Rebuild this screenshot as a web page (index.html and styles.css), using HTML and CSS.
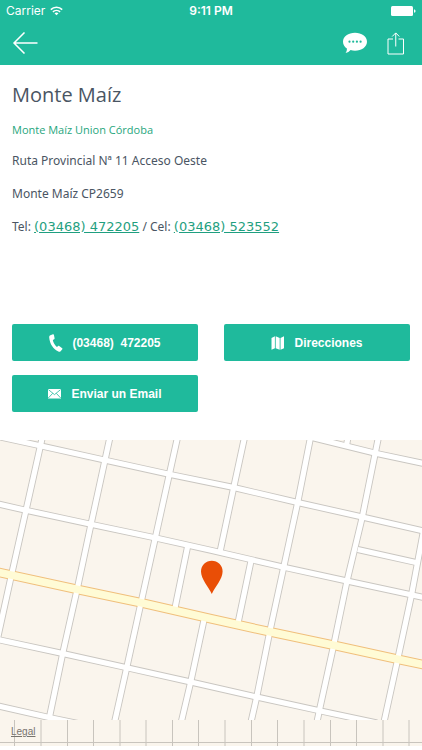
FILE: index.html
```
<!DOCTYPE html>
<html lang="es">
  <head>
    <meta charset="utf-8">
    <meta name="viewport" content="width=device-width, initial-scale=1">
    <title>Monte Maíz</title>
    <link rel="stylesheet" href="styles.css">
  </head>
  <body>
    <header class="header">
      <div class="status">
        <div class="carrier">
          <span>Carrier</span>
          <svg width="13" height="10" viewBox="0 0 13 10" fill="none" stroke="#fff" stroke-width="1.6">
            <path d="M.8 3.6a8.2 8.2 0 0 1 11.4 0M2.9 5.9a5.2 5.2 0 0 1 7.2 0"/>
            <path d="M4.5 7.3a3 3 0 0 1 4 0l-2 2z" fill="#fff" stroke="none"/>
          </svg>
        </div>
        <div class="time">9:11 PM</div>
        <div class="battery">
          <svg width="25" height="10" viewBox="0 0 25 10" fill="#fff">
            <rect width="22" height="10" rx="1.5"/>
            <path d="M23 3.2q1.6.4 1.6 1.8T23 6.8z"/>
          </svg>
        </div>
      </div>
      <nav class="toolbar">
        <button class="icon-button" aria-label="Volver">
          <svg width="26" height="22" viewBox="0 0 26 22" fill="none" stroke="#fff" stroke-width="1.5">
            <path d="M12.500.5 2 11l10.500 10.500M2 11h23.500"/>
          </svg>
        </button>
        <div class="actions">
          <button class="icon-button" aria-label="Comentarios">
            <svg width="24" height="22" viewBox="0 0 24 22">
              <path fill="#fff" d="M12 .8c6.600 0 12 3.800 12 8.900s-5.400 9-12 9c-1.600 0-3.100-.2-4.400-.6C6.300 19.600 4.600 20.800 2.600 21c.9-1.200 1.400-2.900 1.300-4.500C1.500 14.900 0 12.500 0 9.700 0 4.600 5.400.8 12 .8z"/>
              <g fill="#1fba9c"><circle cx="6.500" cy="9.700" r="1.100"/><circle cx="10.200" cy="9.700" r="1.100"/><circle cx="13.900" cy="9.700" r="1.100"/><circle cx="17.600" cy="9.700" r="1.100"/></g>
            </svg>
          </button>
          <button class="icon-button" aria-label="Compartir">
            <svg width="18" height="23" viewBox="0 0 18 23" fill="none" stroke="#fff">
              <path d="M6 7H1v15h15.500V7h-5M8.750 14.500V1M5.200 4.500 8.750.9l3.550 3.600"/>
            </svg>
          </button>
        </div>
      </nav>
    </header>

    <main>
      <section class="info">
        <h1>Monte Maíz</h1>
        <p class="region">Monte Maíz Union Córdoba</p>
        <p>Ruta Provincial Nª 11 Acceso Oeste</p>
        <p>Monte Maíz CP2659</p>
        <p>Tel: <a href="tel:03468472205">(03468) 472205</a> / Cel: <a href="tel:03468523552">(03468) 523552</a></p>
      </section>

      <section class="buttons">
        <button class="button">
          <svg width="14" height="18" viewBox="0 0 14 18" fill="#fff">
            <path d="M1.400 1.300 3.900.3c.5-.2.900 0 1 .5l.7 3.500c.1.400-.1.700-.4.900l-1.400.8c.5 2.600 2 5.200 4.100 6.900l1.300-.9c.3-.2.700-.2 1 0l3 2.200c.4.300.4.700.1 1l-1.700 2c-.6.600-1.400.6-2.200.3C4.300 15.200.7 10 .2 3.500.1 2.500.500 1.700 1.400 1.300z"/>
          </svg>
          <span>(03468)  472205</span>
        </button>
        <button class="button">
          <svg width="14" height="14" viewBox="0 0 14 14" fill="#fff">
            <path d="M.5 2 3.900.3v11.900L.5 13.800zM4.700.3l4 1.700v11.800l-4-1.600zM9.500 2 13 .3v11.900l-3.500 1.600z"/>
          </svg>
          <span>Direcciones</span>
        </button>
        <button class="button">
          <svg width="14" height="10" viewBox="0 0 14 10">
            <rect width="13" height="9.500" fill="#fff"/>
            <path d="M.4.600l6.100 5 6.100-5M.3 9l4.400-4.700M12.700 9 8.300 4.300" fill="none" stroke="#1fba9c" stroke-width=".8"/>
          </svg>
          <span>Enviar un Email</span>
        </button>
      </section>

      <section class="map">
        <svg class="map-canvas" viewBox="0 0 422 306">
          <defs>
            <clipPath id="tiles"><rect width="422" height="280"/></clipPath>
            <g id="streets">
              <path d="M0-3 40 5.700 105.700 20.300 169.300 34.300 233.700 47.500 297.700 62.500 362.300 77 424 91"/>
              <path d="M-2 64 26 70.300 91 84.300 155.300 97.900 211 110.300 283.700 127.200 347 141 424 157.500"/>
              <path d="M-2 199.600 62.700 213.500 126.700 227.700 190.700 242 256.700 257 319.300 270.700 377 283"/>
              <path d="M-2 266 49.500 277.600 78 283.500"/>
              <path d="M310-3 375.700 13.300 424 23.500M357.700 109.500 417 122.700"/>
              <path d="M42.400-3 26 70.300 11 137-2.800 200"/>
              <path d="M110-3 91 84.300 77 150 62.700 213.500 49.500 277"/>
              <path d="M177.600-3 155.300 97.900 141 162.700 126.700 227.700 114.600 282"/>
              <path d="M244.600-3 233.700 47.500 220 112M204 180 190.700 242 181.300 282"/>
              <path d="M187.700 106 175 168M251 121 238 183"/>
              <path d="M310.600-3 297.700 62.500 283.700 127.200 269.700 192 256.700 257 251 282"/>
              <path d="M378.500-3 362.300 77 347 141 333.700 205.300 319.300 270.700 317 282"/>
              <path d="M423.500 91 411.500 155 397.700 219.300 384 282M348-3 346.400 6"/>
            </g>
            <path id="route" d="M-3 132 77.700 149.500 141 162.700 211 178.700 269.700 191.800 333.700 205.300 397.700 219.300 425 225"/>
          </defs>
          <rect width="422" height="306" fill="#faf5ed"/>
          <g clip-path="url(#tiles)" fill="none">
            <use href="#streets" stroke="#c9c6c1" stroke-width="7"/>
            <use href="#route" stroke="#f0bf7c" stroke-width="9.600"/>
            <use href="#streets" stroke="#fff" stroke-width="5.200"/>
            <use href="#route" stroke="#fffbd5" stroke-width="7.600"/>
          </g>
          <!-- tiles not loaded yet -->
          <path d="M14.500 280v26M41 280v26M67.500 280v26M93.500 280v26M120 280v26M146 280v26M172.500 280v26M198.500 280v26M225 280v26M251.500 280v26M277.500 280v26M304 280v26M330.500 280v26M356.500 280v26M383 280v26M409 280v26M0 302.500h422" fill="none" stroke="#c8c4bd"/>
          <path d="M211.800 154C208.500 147 201 139 201 131.500a10.800 10.800 0 0 1 21.600 0C222.600 139 215 147 211.800 154z" fill="#e94e06"/>
        </svg>
        <a class="legal" href="#legal">Legal</a>
      </section>
    </main>
  </body>
</html>
```

FILE: styles.css
```
* {
  box-sizing: border-box;
}
body {
  margin: 0;
  background-color: #fff;
  color: #4a5563;
  font-family: "Noto Sans", sans-serif;
  font-size: 12px;
  line-height: 17px;
}
svg {
  display: block;
}
button {
  border: none;
  padding: 0;
  cursor: pointer;
}
.header {
  background-color: #1fba9c;
  color: #fff;
}
.status {
  display: grid;
  grid-template-columns: 1fr auto 1fr;
  align-items: center;
  height: 21px;
  padding: 0 6px;
  font-family: Inter, sans-serif;
  font-size: 12px;
}
.carrier {
  display: flex;
  align-items: center;
  gap: 5px;
}
.time {
  font-weight: 600;
}
.battery {
  justify-self: end;
}
.toolbar {
  display: flex;
  align-items: center;
  justify-content: space-between;
  height: 44px;
  padding: 0 17px 0 12px;
}
.icon-button {
  background: none;
}
.actions {
  display: flex;
  align-items: center;
  gap: 20px;
}
.info {
  padding: 16px 12px 0;
  min-height: 259px;
}
.info h1 {
  margin: 0 0 13px;
  font-family: "Open Sans", sans-serif;
  font-size: 20px;
  font-weight: normal;
  line-height: 27px;
}
.info p {
  margin: 0 0 16px;
}
.info .region {
  margin-bottom: 14px;
  color: #1fa67d;
  font-family: "Open Sans", sans-serif;
  font-size: 11px;
}
.info a {
  color: #1f9f80;
  font-family: "DejaVu Sans", sans-serif;
  font-size: 13px;
}
.buttons {
  display: grid;
  grid-template-columns: 1fr 1fr;
  gap: 14px 26px;
  padding: 0 12px 28px;
}
.button {
  display: flex;
  align-items: center;
  justify-content: center;
  gap: 9px;
  height: 37px;
  border-radius: 2px;
  background-color: #1fba9c;
  color: #fff;
  font-family: "Liberation Sans", sans-serif;
  font-size: 12px;
  font-weight: bold;
  white-space: pre;
}
.map {
  position: relative;
}
.map-canvas {
  width: 100%;
  height: auto;
}
.legal {
  position: absolute;
  left: 11px;
  bottom: 6px;
  color: #77736d;
  font-family: "Liberation Sans", sans-serif;
  font-size: 10px;
}
```
